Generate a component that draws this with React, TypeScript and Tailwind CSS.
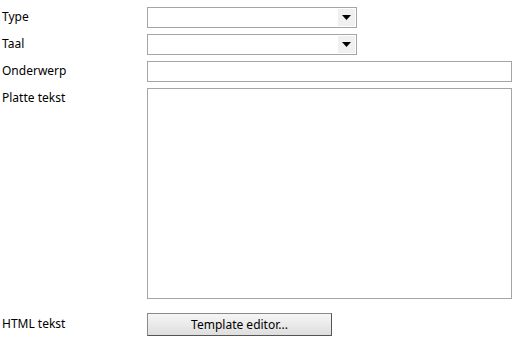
const labelCls = "h-5 leading-5 text-[12px] text-black pl-[2px]";

const SelectBox = () => (
  <div className="flex h-[21px] w-[210px] items-stretch border border-[#a5a5a5] bg-white p-[1px]">
    <div className="flex-1" />
    <div className="flex w-[17px] items-center justify-center bg-[#f0f0f0]">
      <svg width="9" height="5" viewBox="0 0 9 5">
        <path d="M0 0h9L4.5 5z" fill="#000" />
      </svg>
    </div>
  </div>
);

export default function App() {
  return (
    <div
      className="h-[343px] w-[516px] bg-white pt-[7px]"
      style={{ fontFamily: '"Noto Sans", "Open Sans", sans-serif' }}
    >
      <div className="grid grid-cols-[147px_1fr] gap-y-[6px] pr-[4px]">
        <div className={labelCls}>Type</div>
        <SelectBox />
        <div className={labelCls}>Taal</div>
        <SelectBox />
        <div className={labelCls}>Onderwerp</div>
        <div className="h-[21px] w-[365px] border border-[#a5a5a5] bg-white" />
        <div className={labelCls}>Platte tekst</div>
        <div className="h-[211px] w-[365px] border border-[#a5a5a5] bg-white" />
        <div className={`${labelCls} mt-[8px] h-[22px] leading-[22px]`}>HTML tekst</div>
        <button className="mt-[8px] h-[23px] w-[185px] border border-[#8a8a8a] border-r-[#555] border-b-[#555] bg-gradient-to-b from-[#f6f6f6] to-[#dedede] text-[12px] text-black">
          Template editor...
        </button>
      </div>
    </div>
  );
}
